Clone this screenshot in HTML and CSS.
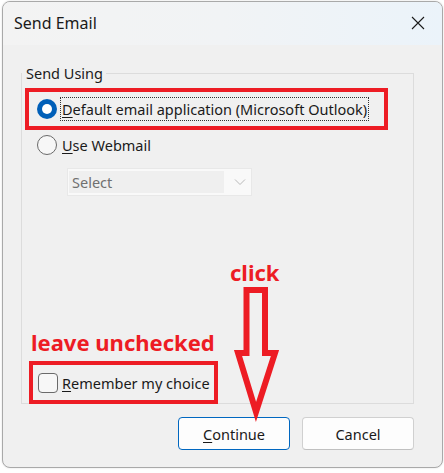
FILE: index.html
```html
<!DOCTYPE html>
<html>
<head>
<meta charset="utf-8">
<link rel="stylesheet" href="styles.css">
</head>
<body>
<div class="dialog">
  <div class="titlebar">
    <span class="title">Send Email</span>
    <svg class="close" width="14" height="14" viewBox="0 0 14 14"><path d="M1 1 L13 13 M13 1 L1 13" stroke="#1b1b1b" stroke-width="1.1" fill="none"/></svg>
  </div>
  <div class="content">
    <fieldset class="group">
      <legend>Send Using</legend>
      <div class="hl hl1">
        <span class="radio checked"></span>
        <span class="label focus"><u>D</u>efault email application (Microsoft Outlook)</span>
      </div>
      <div class="row row2">
        <span class="radio"></span>
        <span class="label"><u>U</u>se Webmail</span>
      </div>
      <div class="select">
        <span class="sel-field">Select</span>
        <svg class="chev" width="12" height="8" viewBox="0 0 12 8"><path d="M1 1.5 L6 6.5 L11 1.5" stroke="#b8b8b8" stroke-width="1" fill="none"/></svg>
      </div>
      <div class="note">leave unchecked</div>
      <div class="hl hl2">
        <span class="check"></span>
        <span class="label"><u>R</u>emember my choice</span>
      </div>
    </fieldset>
    <div class="buttons">
      <button class="btn primary"><u>C</u>ontinue</button>
      <button class="btn">Cancel</button>
    </div>
  </div>
</div>
<div class="click">click</div>
<svg class="arrow" width="444" height="473" viewBox="0 0 444 473"><polygon points="246.5,290 265,290 265,353 275,353 256,412 238,353 246.5,353" fill="none" stroke="#ed1c24" stroke-width="6" stroke-linejoin="miter"/></svg>
</body>
</html>
```
FILE: styles.css
```css
html, body {
  margin: 0;
  padding: 0;
}
body {
  width: 444px;
  height: 473px;
  overflow: hidden;
  background: #ffffff;
  position: relative;
  font-family: "Noto Sans", "Open Sans", sans-serif;
  color: #1a1a1a;
}
.dialog {
  position: absolute;
  left: 2px;
  top: 1px;
  width: 439px;
  height: 465px;
  border: 1px solid #a9a9a9;
  border-radius: 8px;
  background: #f0f0f0;
  overflow: hidden;
  box-shadow: 0 0 2px rgba(0,0,0,0.15);
}
.titlebar {
  height: 43px;
  display: flex;
  align-items: center;
  justify-content: space-between;
  padding: 0 17px 0 11px;
  background: linear-gradient(90deg, #f3f3f3 0%, #f1f3f5 50%, #ebf3fa 100%);
}
.title {
  font-size: 16px;
  color: #1a1a1a;
  margin-top: -2px;
}
.close {
  display: block;
  margin-top: -1px;
}
.content {
  padding: 18px 28px 0 18px;
}
.group {
  margin: 0;
  padding: 5px 3px 0 3px;
  border: 1px solid #dcdcdc;
  min-width: 0;
  display: block;
}
legend {
  padding: 0 3px 0 4px;
  margin-left: -3px;
  font-size: 14.5px;
  line-height: 20px;
  color: #1a1a1a;
}
.hl {
  border: 4px solid #ed1c24;
  display: flex;
  align-items: center;
  box-sizing: border-box;
}
.hl1 {
  width: 363px;
  height: 42px;
  padding-left: 8px;
  gap: 4px;
}
.label {
  font-size: 14.5px;
  line-height: 20px;
  color: #1a1a1a;
  white-space: nowrap;
}
.label u, .btn u {
  text-decoration-thickness: 1px;
  text-underline-offset: 2px;
}
.focus {
  outline: 1px dotted #333;
  outline-offset: 0;
  padding: 1px 1px;
  line-height: 20px;
}
.radio {
  width: 20px;
  height: 20px;
  box-sizing: border-box;
  border-radius: 50%;
  border: 1px solid #6a6a6a;
  background: #f7f7f7;
  flex: none;
  position: relative;
}
.radio.checked {
  border: none;
  background: #005fb8;
}
.radio.checked::after {
  content: "";
  position: absolute;
  left: 5px;
  top: 5px;
  width: 10px;
  height: 10px;
  border-radius: 50%;
  background: #ffffff;
}
.row {
  display: flex;
  align-items: center;
  gap: 5px;
}
.row2 {
  margin-top: 5px;
  padding-left: 12px;
  height: 20px;
}
.select {
  margin-top: 13px;
  margin-left: 42px;
  width: 185px;
  height: 28px;
  box-sizing: border-box;
  border: 1px solid #e8e8e8;
  background: #f9f9f9;
  display: flex;
  align-items: center;
  padding: 2px 0 2px 1px;
}
.sel-field {
  width: 155px;
  height: 22px;
  background: #efefef;
  color: #707070;
  font-size: 14.5px;
  line-height: 22px;
  padding-left: 3px;
  box-sizing: border-box;
}
.chev {
  margin-left: 10px;
}
.note {
  margin-top: 131px;
  margin-left: 6px;
  font-size: 22px;
  font-weight: 700;
  line-height: 30px;
  color: #ed1c24;
  white-space: nowrap;
}
.hl2 {
  margin-top: 4px;
  margin-left: 4px;
  margin-bottom: -1px;
  width: 189px;
  height: 43px;
  padding-left: 5px;
  gap: 4px;
}
.check {
  width: 20px;
  height: 20px;
  box-sizing: border-box;
  border: 1px solid #6a6a6a;
  border-radius: 4px;
  background: #f7f7f7;
  flex: none;
}
.buttons {
  margin-top: 13px;
  display: flex;
  justify-content: flex-end;
  gap: 12px;
}
.btn {
  width: 112px;
  height: 33px;
  box-sizing: border-box;
  border: 1px solid #d0d0d0;
  border-bottom-color: #c0c0c0;
  border-radius: 4px;
  background: #fdfdfd;
  font-family: "Noto Sans", "Open Sans", sans-serif;
  font-size: 14.5px;
  color: #1a1a1a;
  padding: 0;
}
.btn.primary {
  border: 1px solid #0067c0;
}
.click {
  position: absolute;
  left: 230px;
  top: 257px;
  font-size: 22px;
  font-weight: 700;
  line-height: 30px;
  color: #ed1c24;
}
.arrow {
  position: absolute;
  left: 0;
  top: 0;
}
```
